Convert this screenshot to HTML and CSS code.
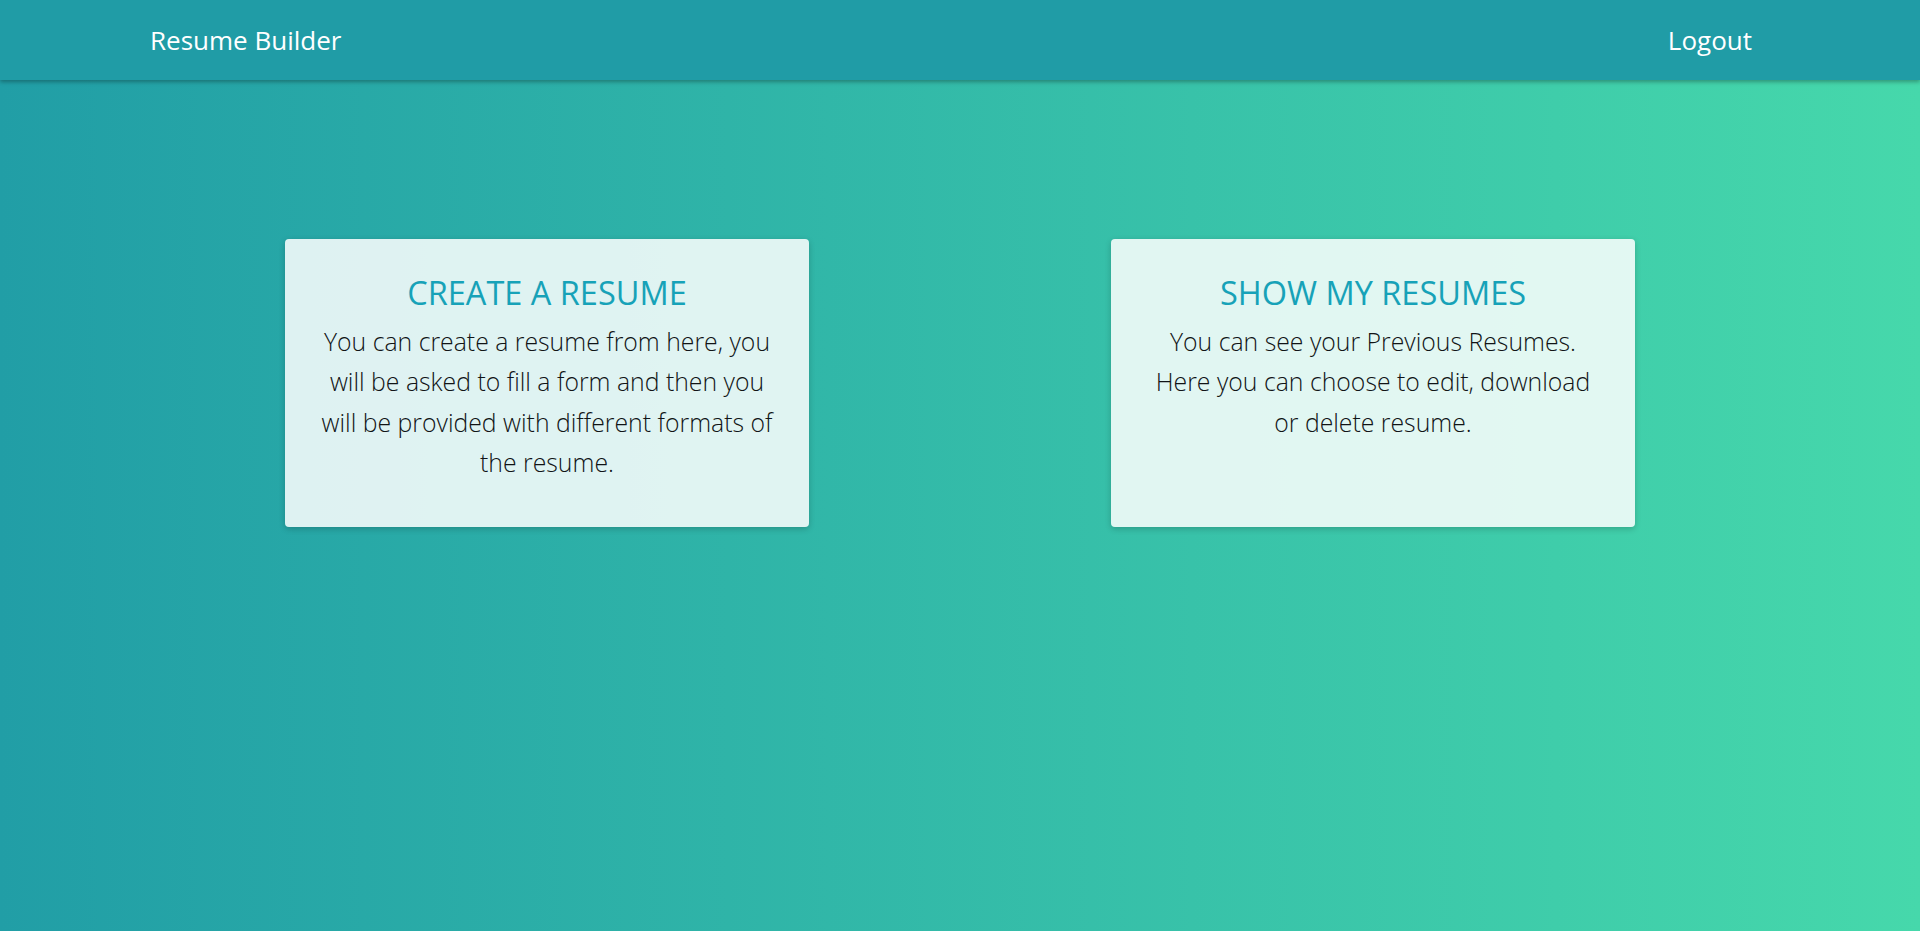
FILE: index.html
```html
<!DOCTYPE html>
<html lang="en">
<head>
<meta charset="utf-8">
<title>Resume Builder</title>
<link rel="stylesheet" href="styles.css">
</head>
<body>
<nav class="navbar">
  <a class="brand" href="#">Resume Builder</a>
  <a class="nav-link" href="#">Logout</a>
</nav>
<main class="content">
  <div class="card">
    <h2 class="card-title">CREATE A RESUME</h2>
    <p class="card-text">You can create a resume from here, you<br>will be asked to fill a form and then you<br>will be provided with different formats of<br>the resume.</p>
  </div>
  <div class="card">
    <h2 class="card-title">SHOW MY RESUMES</h2>
    <p class="card-text">You can see your Previous Resumes.<br>Here you can choose to edit, download<br>or delete resume.</p>
  </div>
</main>
</body>
</html>
```

FILE: styles.css
```css
html, body {
  margin: 0;
  padding: 0;
  height: 100%;
}
body {
  font-family: "Open Sans", "Noto Sans", sans-serif;
  background: linear-gradient(to right, #219ea6 0%, #46d8ab 100%);
  color: #212529;
  min-height: 931px;
}
.navbar {
  height: 80px;
  background: #209ca6;
  box-shadow: 0 2px 4px rgba(0, 0, 0, 0.3);
  display: flex;
  align-items: center;
  justify-content: space-between;
  padding: 0 168px 0 150px;
  box-sizing: border-box;
}
.brand, .nav-link {
  color: #ffffff;
  text-decoration: none;
  font-size: 26px;
  font-weight: 400;
  line-height: 1;
}
.content {
  display: flex;
  gap: 302px;
  padding: 159px 0 0 285px;
}
.card {
  width: 524px;
  height: 288px;
  box-sizing: border-box;
  background: rgba(255, 255, 255, 0.85);
  border-radius: 4px;
  box-shadow: 0 2px 6px rgba(0, 0, 0, 0.2);
  padding: 34px 20px 20px;
  text-align: center;
}
.card-title {
  margin: 0 0 9px;
  font-size: 32.5px;
  font-weight: 400;
  line-height: 1.2;
  color: #17a2b8;
}
.card-text {
  margin: 0;
  font-size: 24.8px;
  font-weight: 300;
  line-height: 40.4px;
  color: #111416;
}
```
